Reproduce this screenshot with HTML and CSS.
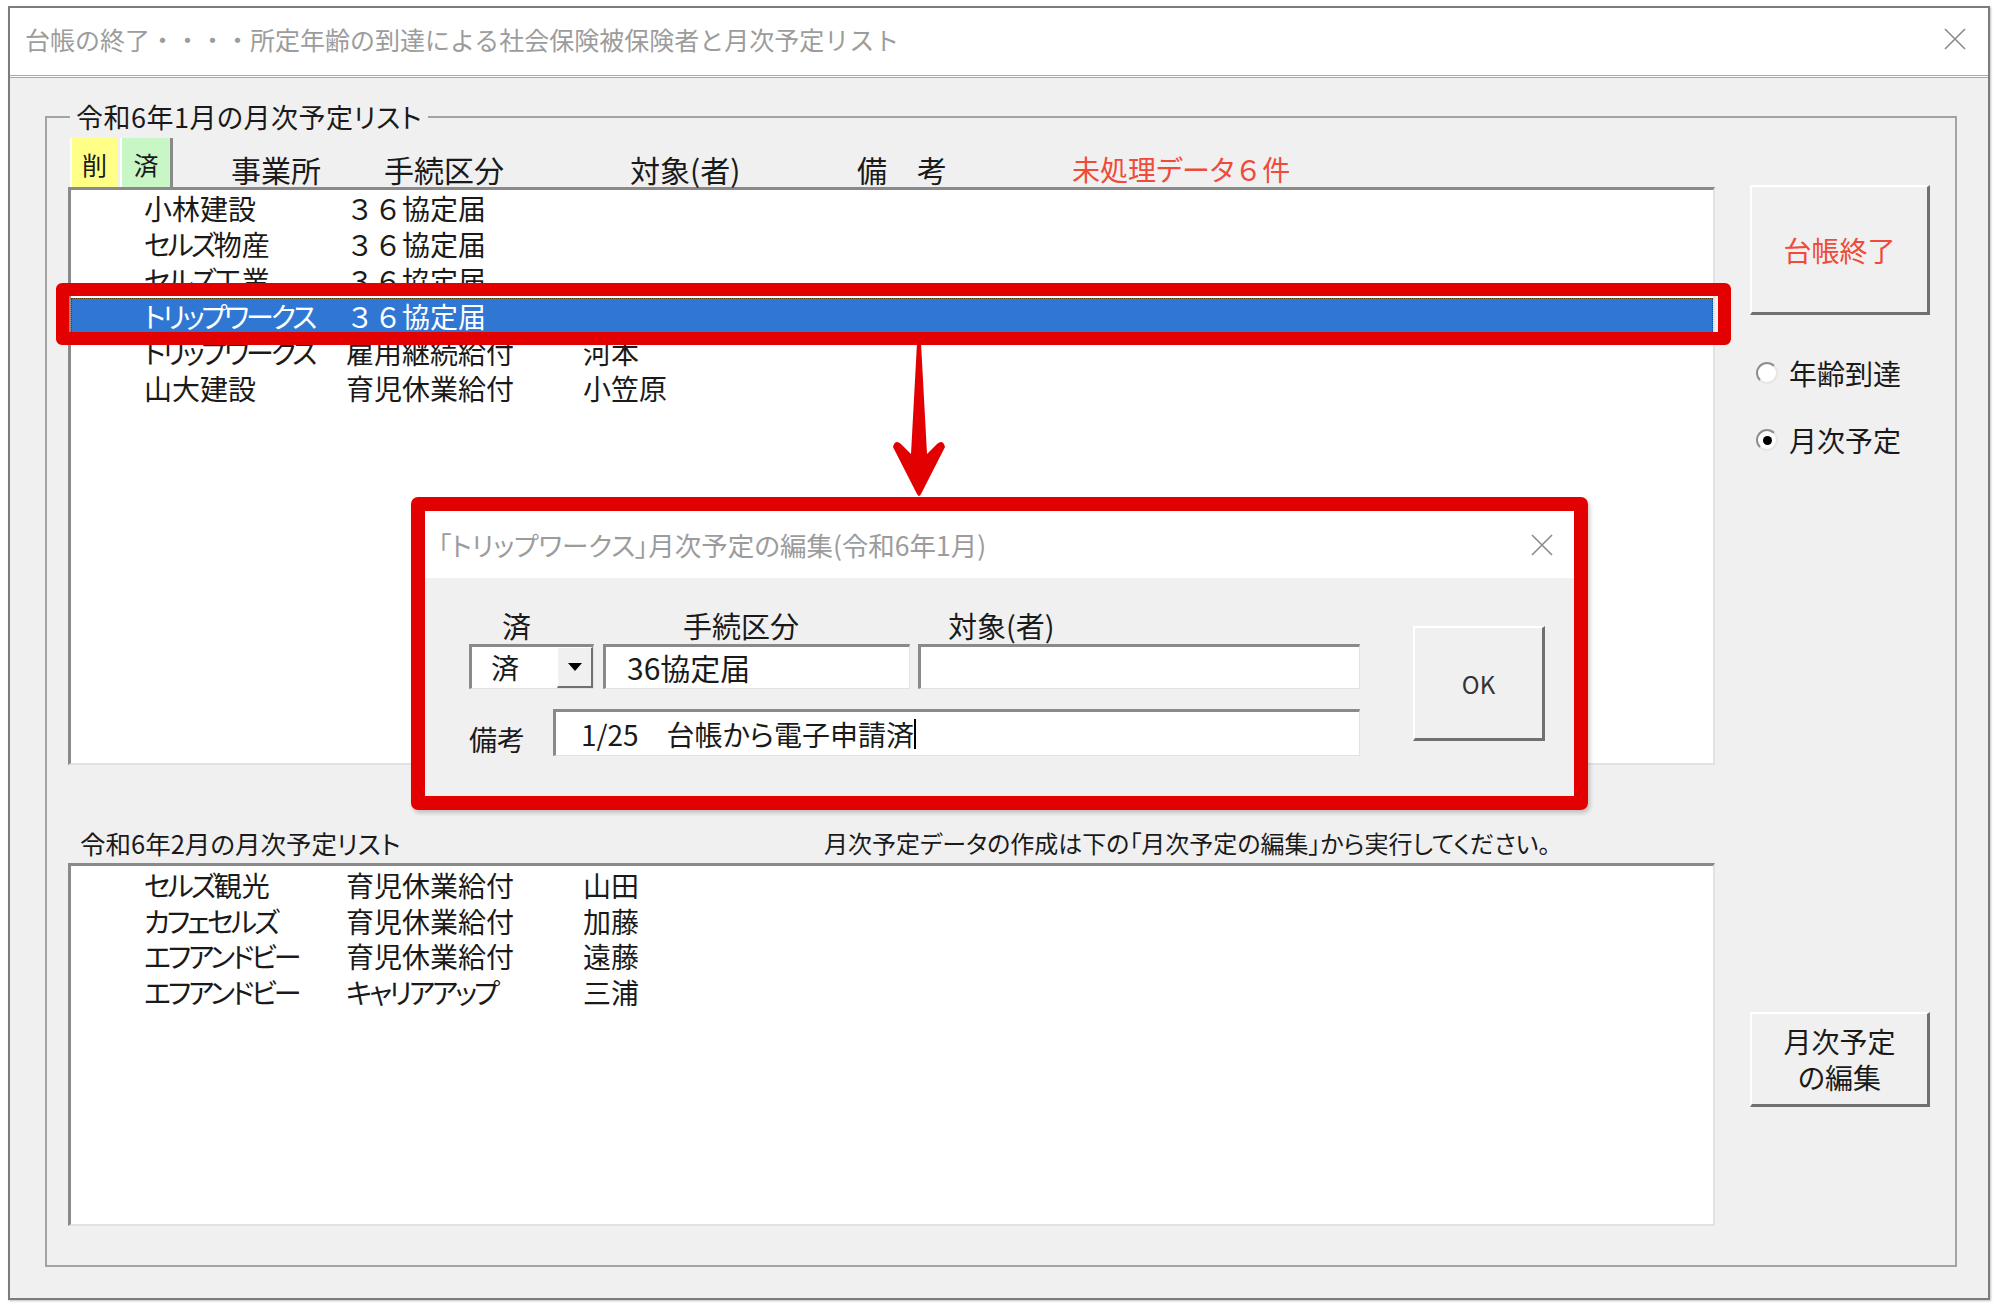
FILE: index.html
```html
<!DOCTYPE html>
<html lang="ja">
    <head>
        <meta charset="UTF-8" />
        <meta name="viewport" content="width=device-width, initial-scale=1.0" />
        <title>台帳の終了</title>
        <link rel="stylesheet" href="styles.css">
    </head>
    <body>
        <div class="window">
            <div class="titlebar">
                <span class="title">台帳の終了・・・・所定年齢の到達による社会保険被保険者と月次予定リスト</span>
                <svg class="close" width="22" height="22" viewBox="0 0 22 22">
                    <path d="M1 1 L21 21 M21 1 L1 21" stroke="#8a8a8a" stroke-width="1.6" fill="none" />
                </svg>
            </div>
            <div class="client">
                <fieldset class="group">
                    <legend>令和6年1月の月次予定リスト</legend>
                    <div class="group-body">
                        <div class="main">
                            <div class="list-head">
                                <span class="flag flag-del">削</span>
                                <span class="flag flag-done">済</span>
                                <span class="col-h h-office">事業所</span>
                                <span class="col-h h-proc">手続区分</span>
                                <span class="col-h h-target">対象(者)</span>
                                <span class="col-h h-note">備　考</span>
                                <span class="col-h h-count">未処理データ<span class="fw">６</span>件</span>
                            </div>
                            <div class="list list-now">
                                <div class="row"><span class="c1">小林建設</span><span class="c2"><span class="fw">３６</span>協定届</span><span class="c3"></span></div>
                                <div class="row"><span class="c1"><span class="k">セルズ</span>物産</span><span class="c2"><span class="fw">３６</span>協定届</span><span class="c3"></span></div>
                                <div class="row"><span class="c1"><span class="k">セルズ</span>工業</span><span class="c2"><span class="fw">３６</span>協定届</span><span class="c3"></span></div>
                                <div class="row selected"><span class="c1"><span class="k">トリップワークス</span></span><span class="c2"><span class="fw">３６</span>協定届</span><span class="c3"></span></div>
                                <div class="row"><span class="c1"><span class="k">トリップワークス</span></span><span class="c2">雇用継続給付</span><span class="c3">河本</span></div>
                                <div class="row"><span class="c1">山大建設</span><span class="c2">育児休業給付</span><span class="c3">小笠原</span></div>
                            </div>
                            <div class="next-head">
                                <span class="next-title">令和6年2月の月次予定リスト</span>
                                <span class="next-hint">月次予定データの作成は下の「月次予定の編集」から実行してください。</span>
                            </div>
                            <div class="list list-next">
                                <div class="row"><span class="c1"><span class="k">セルズ</span>観光</span><span class="c2">育児休業給付</span><span class="c3">山田</span></div>
                                <div class="row"><span class="c1"><span class="k">カフェセルズ</span></span><span class="c2">育児休業給付</span><span class="c3">加藤</span></div>
                                <div class="row"><span class="c1"><span class="k">エフアンドビー</span></span><span class="c2">育児休業給付</span><span class="c3">遠藤</span></div>
                                <div class="row"><span class="c1"><span class="k">エフアンドビー</span></span><span class="c2"><span class="k">キャリアアップ</span></span><span class="c3">三浦</span></div>
                            </div>
                        </div>
                        <div class="side">
                            <div class="btn btn-end">台帳終了</div>
                            <div class="radio"><span class="dot"></span>年齢到達</div>
                            <div class="radio radio-on"><span class="dot"></span>月次予定</div>
                            <div class="btn btn-edit">月次予定<br>の編集</div>
                        </div>
                    </div>
                </fieldset>
            </div>
        </div>

        <!-- 説明用の赤枠と矢印 -->
        <div class="mark-row"></div>
        <svg class="mark-arrow" width="58" height="156" viewBox="0 0 58 156">
            <path d="M27 0 L31 0 L37 111 L47 101 Q53 96 55 104 L31 151 Q29 155 27 151 L3 104 Q5 96 11 101 L21 111 Z" fill="#e20000" />
        </svg>

        <div class="mark-dialog">
            <div class="dialog">
                <div class="dlg-title">
                    <span>「トリップワークス」月次予定の編集(令和6年1月)</span>
                    <svg class="close" width="22" height="22" viewBox="0 0 22 22">
                        <path d="M1 1 L21 21 M21 1 L1 21" stroke="#8a8a8a" stroke-width="1.6" fill="none" />
                    </svg>
                </div>
                <div class="dlg-body">
                    <div class="dlg-form">
                        <div class="dlg-labels">
                            <span class="lb-done">済</span>
                            <span class="lb-proc">手続区分</span>
                            <span class="lb-target">対象(者)</span>
                        </div>
                        <div class="dlg-fields">
                            <div class="combo">
                                <span class="combo-text">済</span>
                                <span class="combo-btn"><span class="tri"></span></span>
                            </div>
                            <div class="field field-proc">36協定届</div>
                            <div class="field field-target"></div>
                        </div>
                        <div class="dlg-note">
                            <span class="lb-note">備考</span>
                            <div class="field field-note">1/25　台帳から電子申請済<span class="caret"></span></div>
                        </div>
                    </div>
                    <div class="btn btn-ok">OK</div>
                </div>
            </div>
        </div>
    </body>
</html>
```

FILE: styles.css
```css
* {
    margin: 0;
    padding: 0;
    box-sizing: border-box;
}
body {
    position: relative;
    width: 1999px;
    height: 1309px;
    background-color: #fff;
    font-family: "Noto Sans CJK JP", "Noto Sans", sans-serif;
    font-feature-settings: "palt";
    color: #1a1a1a;
}

/* ウィンドウ */
.window {
    margin: 6px 0 0 8px;
    width: 1982px;
    height: 1294px;
    border: 2px solid #7c7c7c;
    display: flex;
    flex-direction: column;
    box-shadow: 1px 1px 2px rgba(0, 0, 0, 0.25);
}
.titlebar {
    height: 70px;
    background-color: #fff;
    border-bottom: 3px double #a8a8a8;
    display: flex;
    align-items: center;
    justify-content: space-between;
    padding: 0 22px 5px 15px;
}
.title {
    font-size: 25px;
    font-feature-settings: normal;
    color: #9c9c9c;
}
.client {
    flex: 1;
    background-color: #f0f0f0;
    padding: 24px 31px 31px 35px;
    display: flex;
}

/* グループ枠 */
.group {
    flex: 1;
    border: 2px solid #a3a3a3;
    min-width: 0;
}
.group legend {
    font-size: 27px;
    line-height: 30px;
    letter-spacing: 0.5px;
    margin-left: 23px;
    padding: 0 6px;
}
.group-body {
    display: flex;
}
.main {
    width: 1668px;
}
.side {
    width: 180px;
    margin-left: 35px;
    display: flex;
    flex-direction: column;
}

/* 見出し */
.list-head {
    display: flex;
    height: 55px;
    padding: 6px 0 0 23px;
}
.flag {
    width: 47px;
    font-size: 25px;
    text-align: center;
    padding-top: 8px;
    border-left: 2px solid #fff;
}
.flag-del {
    background-color: #ffff88;
}
.flag-done {
    width: 53px;
    margin-left: 3px;
    background-color: #c8f6c4;
    border-right: 3px solid #8a8a8a;
}
.col-h {
    font-size: 30px;
    line-height: 36px;
    align-self: flex-end;
}
.h-office {
    margin-left: 58px;
    width: 153px;
}
.h-proc {
    width: 246px;
}
.h-target {
    width: 227px;
}
.h-note {
    width: 215px;
}
.h-count {
    color: #f04a3a;
    font-size: 28px;
}

/* リスト */
.list {
    margin-left: 21px;
    width: 1647px;
    background-color: #fff;
    border-style: solid;
    border-width: 3px 2px 2px 3px;
    border-color: #8a8a8a #e2e2e2 #e2e2e2 #8a8a8a;
}
.list-now {
    height: 578px;
    padding-top: 0;
}
.list-next {
    height: 363px;
    padding-top: 1px;
}
.row {
    display: flex;
    height: 36px;
    line-height: 36px;
    font-size: 28px;
    padding-left: 73px;
    white-space: nowrap;
}
.list-next .row {
    height: 35.7px;
}
.k {
    letter-spacing: -3px;
}
.fw {
    font-feature-settings: normal;
}
.c1 {
    width: 202px;
}
.c2 {
    width: 237px;
}
.row.selected {
    background-color: #3077d4;
    color: #fff;
    outline: 1px dotted #5a3a10;
    outline-offset: -1px;
}
.next-head {
    display: flex;
    height: 30px;
    line-height: 30px;
    margin: 63px 0 5px;
    padding-left: 33px;
    font-size: 24px;
}
.next-title {
    width: 744px;
    font-size: 25.5px;
}

/* ボタン */
.btn {
    background-color: #f0f0f0;
    border-style: solid;
    border-width: 2px 3px 3px 2px;
    border-color: #fff #707070 #707070 #fff;
    display: flex;
    align-items: center;
    justify-content: center;
    text-align: center;
}
.btn-end {
    margin-top: 53px;
    height: 130px;
    font-size: 28px;
    color: #f04a3a;
}
.btn-edit {
    margin-top: 554px;
    height: 95px;
    font-size: 28px;
    line-height: 36px;
}
.radio {
    display: flex;
    align-items: center;
    height: 36px;
    font-size: 28px;
    padding-left: 6px;
    margin-top: 40px;
}
.radio + .radio {
    margin-top: 31px;
}
.dot {
    width: 22px;
    height: 22px;
    margin-right: 11px;
    border-radius: 50%;
    background-color: #fff;
    border: 2px solid;
    border-color: #8e8e8e #e6e6e6 #e6e6e6 #8e8e8e;
    display: flex;
    align-items: center;
    justify-content: center;
}
.radio-on .dot::after {
    content: "";
    width: 9px;
    height: 9px;
    border-radius: 50%;
    background-color: #000;
}

/* 赤枠 */
.mark-row {
    position: absolute;
    left: 56px;
    top: 283px;
    width: 1675px;
    height: 62px;
    border: 13px solid #e20000;
    border-radius: 6px;
}
.mark-arrow {
    position: absolute;
    left: 890px;
    top: 343px;
}
.mark-dialog {
    position: absolute;
    left: 411px;
    top: 497px;
    width: 1177px;
    height: 313px;
    border: 14px solid #e20000;
    border-radius: 7px;
    box-shadow: 2px 3px 4px rgba(0, 0, 0, 0.2);
}
.dialog {
    height: 100%;
    display: flex;
    flex-direction: column;
}
.dlg-title {
    height: 67px;
    background-color: #fff;
    display: flex;
    align-items: center;
    justify-content: space-between;
    padding: 0 21px 0 13px;
    font-size: 26.5px;
    color: #9c9c9c;
}
.dlg-body {
    flex: 1;
    background-color: #f0f0f0;
    display: flex;
    padding: 32px 0 0 44px;
}
.dlg-labels {
    display: flex;
    height: 30px;
    line-height: 30px;
    font-size: 29px;
}
.lb-done {
    width: 214px;
    padding-left: 33px;
}
.lb-proc {
    width: 265px;
}
.dlg-fields {
    display: flex;
    margin-top: 4px;
    height: 45px;
}
.combo {
    width: 125px;
    display: flex;
    background-color: #fff;
    border-style: solid;
    border-width: 3px 1px 1px 3px;
    border-color: #8a8a8a #e2e2e2 #e2e2e2 #8a8a8a;
}
.combo-text {
    flex: 1;
    font-size: 28px;
    line-height: 40px;
    padding-left: 19px;
}
.combo-btn {
    width: 36px;
    background-color: #f0f0f0;
    border-style: solid;
    border-width: 1px 2px 2px 1px;
    border-color: #fff #707070 #707070 #fff;
    display: flex;
    align-items: center;
    justify-content: center;
}
.tri {
    border-left: 7px solid transparent;
    border-right: 7px solid transparent;
    border-top: 8px solid #000;
}
.field {
    background-color: #fff;
    border-style: solid;
    border-width: 3px 1px 1px 3px;
    border-color: #8a8a8a #e2e2e2 #e2e2e2 #8a8a8a;
    font-size: 28px;
    line-height: 40px;
    white-space: nowrap;
}
.field-proc {
    width: 307px;
    margin-left: 9px;
    padding-left: 21px;
    font-size: 30px;
}
.field-target {
    width: 442px;
    margin-left: 8px;
}
.dlg-note {
    display: flex;
    margin-top: 20px;
    height: 47px;
}
.lb-note {
    width: 84px;
    font-size: 28px;
    line-height: 60px;
}
.field-note {
    width: 807px;
    padding-left: 25px;
    line-height: 42px;
    display: flex;
    align-items: center;
}
.caret {
    width: 2px;
    height: 30px;
    background-color: #000;
}
.btn-ok {
    width: 132px;
    height: 115px;
    margin: 16px 0 0 53px;
    font-size: 24px;
    color: #333;
}
```
